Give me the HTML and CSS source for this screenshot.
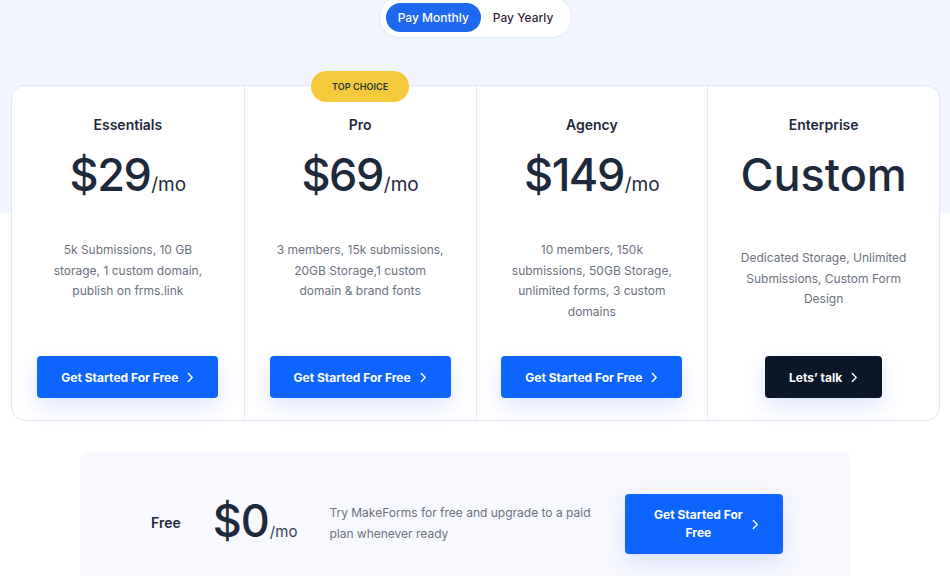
FILE: index.html
```html
<!DOCTYPE html>
<html>
<head>
<meta charset="utf-8">
<link rel="stylesheet" href="styles.css">
</head>
<body>
<div class="page">
  <div class="toggle-wrap">
    <div class="toggle">
      <button class="tg active">Pay Monthly</button>
      <button class="tg">Pay Yearly</button>
    </div>
  </div>

  <div class="plans">
    <div class="plan">
      <h3 class="plan-name">Essentials</h3>
      <div class="price"><span class="amount">$29</span><span class="per">/mo</span></div>
      <p class="desc">5k Submissions, 10 GB storage, 1 custom domain, publish on frms.link</p>
      <a class="btn btn-blue">Get Started For Free <svg class="chev" viewBox="0 0 8 12" width="7" height="11"><path d="M1.5 1.5 L6 6 L1.5 10.5" fill="none" stroke="currentColor" stroke-width="1.6" stroke-linecap="round" stroke-linejoin="round"/></svg></a>
    </div>
    <div class="plan">
      <span class="badge">TOP CHOICE</span>
      <h3 class="plan-name">Pro</h3>
      <div class="price"><span class="amount">$69</span><span class="per">/mo</span></div>
      <p class="desc">3 members, 15k submissions, 20GB Storage,1 custom domain &amp; brand fonts</p>
      <a class="btn btn-blue">Get Started For Free <svg class="chev" viewBox="0 0 8 12" width="7" height="11"><path d="M1.5 1.5 L6 6 L1.5 10.5" fill="none" stroke="currentColor" stroke-width="1.6" stroke-linecap="round" stroke-linejoin="round"/></svg></a>
    </div>
    <div class="plan">
      <h3 class="plan-name">Agency</h3>
      <div class="price"><span class="amount">$149</span><span class="per">/mo</span></div>
      <p class="desc">10 members, 150k submissions, 50GB Storage, unlimited forms, 3 custom domains</p>
      <a class="btn btn-blue">Get Started For Free <svg class="chev" viewBox="0 0 8 12" width="7" height="11"><path d="M1.5 1.5 L6 6 L1.5 10.5" fill="none" stroke="currentColor" stroke-width="1.6" stroke-linecap="round" stroke-linejoin="round"/></svg></a>
    </div>
    <div class="plan">
      <h3 class="plan-name">Enterprise</h3>
      <div class="price"><span class="amount custom">Custom</span></div>
      <p class="desc desc-ent">Dedicated Storage, Unlimited Submissions, Custom Form Design</p>
      <a class="btn btn-dark">Lets’ talk <svg class="chev" viewBox="0 0 8 12" width="7" height="11"><path d="M1.5 1.5 L6 6 L1.5 10.5" fill="none" stroke="currentColor" stroke-width="1.6" stroke-linecap="round" stroke-linejoin="round"/></svg></a>
    </div>
  </div>

  <div class="free">
    <div class="free-name">Free</div>
    <div class="free-price"><span class="amount">$0</span><span class="per">/mo</span></div>
    <p class="free-desc">Try MakeForms for free and upgrade to a paid plan whenever ready</p>
    <a class="btn btn-blue btn-free"><span class="btn-text">Get Started For Free</span> <svg class="chev" viewBox="0 0 8 12" width="7" height="11"><path d="M1.5 1.5 L6 6 L1.5 10.5" fill="none" stroke="currentColor" stroke-width="1.6" stroke-linecap="round" stroke-linejoin="round"/></svg></a>
  </div>
</div>
</body>
</html>
```

FILE: styles.css
```css
* { box-sizing: border-box; }
html, body { margin: 0; padding: 0; }
body {
  font-family: Inter, "Noto Sans", sans-serif;
  color: #1e293b;
  background: #ffffff;
  width: 950px;
  height: 576px;
  overflow: hidden;
}
.page {
  background: linear-gradient(#f1f5fe 0, #f1f5fe 213px, #ffffff 213px);
  min-height: 576px;
}
.toggle-wrap {
  display: flex;
  justify-content: center;
}
.toggle {
  margin-top: -4px;
  margin-left: 1px;
  background: #fff;
  border: 1px solid #e3e8f6;
  border-radius: 22px;
  padding: 6px 6px 5px 6px;
  display: flex;
  gap: 0;
}
.tg {
  font-family: Inter, sans-serif;
  font-size: 12px;
  font-weight: 500;
  border: 0;
  background: transparent;
  color: #3a1f3c;
  border-radius: 16px;
  height: 29px;
  padding: 0 12px;
  white-space: nowrap;
}
.tg.active {
  background: #1f68f0;
  color: #fff;
}
.plans {
  margin: 47px 10px 0 11px;
  display: grid;
  grid-template-columns: repeat(4, 1fr);
  background: #fff;
  border: 1px solid #e2e6f6;
  border-radius: 14px;
  height: 336px;
}
.plan {
  position: relative;
  display: flex;
  flex-direction: column;
  align-items: center;
  padding: 29px 0 22px;
}
.plan + .plan { border-left: 1px solid #e6e9f7; }
.badge {
  position: absolute;
  top: -15px;
  left: 50%;
  transform: translateX(-50%);
  background: #f4c93c;
  color: #1f3a2c;
  font-size: 9px;
  font-weight: 600;
  letter-spacing: 0.1px;
  height: 31px;
  line-height: 31px;
  border-radius: 16px;
  white-space: nowrap;
  width: 98px;
  text-align: center;
}
.plan-name {
  margin: 0;
  font-size: 14px;
  font-weight: 600;
  line-height: 20px;
  color: #1e293b;
}
.price {
  margin-top: 11px;
  height: 58px;
  display: flex;
  align-items: baseline;
  color: #1e293b;
}
.amount {
  font-size: 45px;
  font-weight: 500;
  letter-spacing: -1.5px;
  line-height: 58px;
}
.amount.custom { letter-spacing: 0; font-size: 45px; }
.per {
  font-size: 19px;
  font-weight: 400;
  margin-left: 1px;
}
.desc {
  margin: 36px 0 0;
  width: 176px;
  text-align: center;
  font-size: 12px;
  line-height: 20.5px;
  color: #6b7280;
}
.desc-ent { margin-top: 44px; }
.btn {
  margin-top: auto;
  display: inline-flex;
  align-items: center;
  gap: 9px;
  height: 42px;
  padding: 0 24px;
  border-radius: 4px;
  color: #fff;
  font-size: 12px;
  font-weight: 700;
  white-space: nowrap;
  text-decoration: none;
  box-shadow: 0 8px 22px rgba(40, 90, 240, 0.16);
}
.btn-blue { background: #0e64fe; }
.btn-dark { background: #0b1729; }
.chev { display: block; }

.free {
  margin: 31px 0 0 80px;
  width: 771px;
  height: 150px;
  background: #f8f9fe;
  border-radius: 8px;
  display: flex;
  align-items: center;
  padding: 0 0 6px 71px;
  gap: 32px;
}
.free-name {
  font-size: 14px;
  font-weight: 600;
  color: #1e293b;
  margin-top: -3px;
}
.free-price {
  display: flex;
  align-items: baseline;
  color: #1e293b;
  margin-top: -6px;
}
.free-price .amount { font-size: 45px; line-height: 52px; letter-spacing: -1px; }
.free-price .per { font-size: 15px; color: #374151; }
.free-desc {
  margin: -2px 0 0;
  width: 264px;
  font-size: 12px;
  line-height: 21px;
  color: #6b7280;
}
.btn-free {
  height: 60px;
  width: 158px;
  padding: 0 24px 0 27px;
  white-space: normal;
  gap: 8px;
  margin-top: 0;
}
.btn-text {
  display: block;
  width: 92px;
  text-align: center;
  line-height: 18px;
}
```
